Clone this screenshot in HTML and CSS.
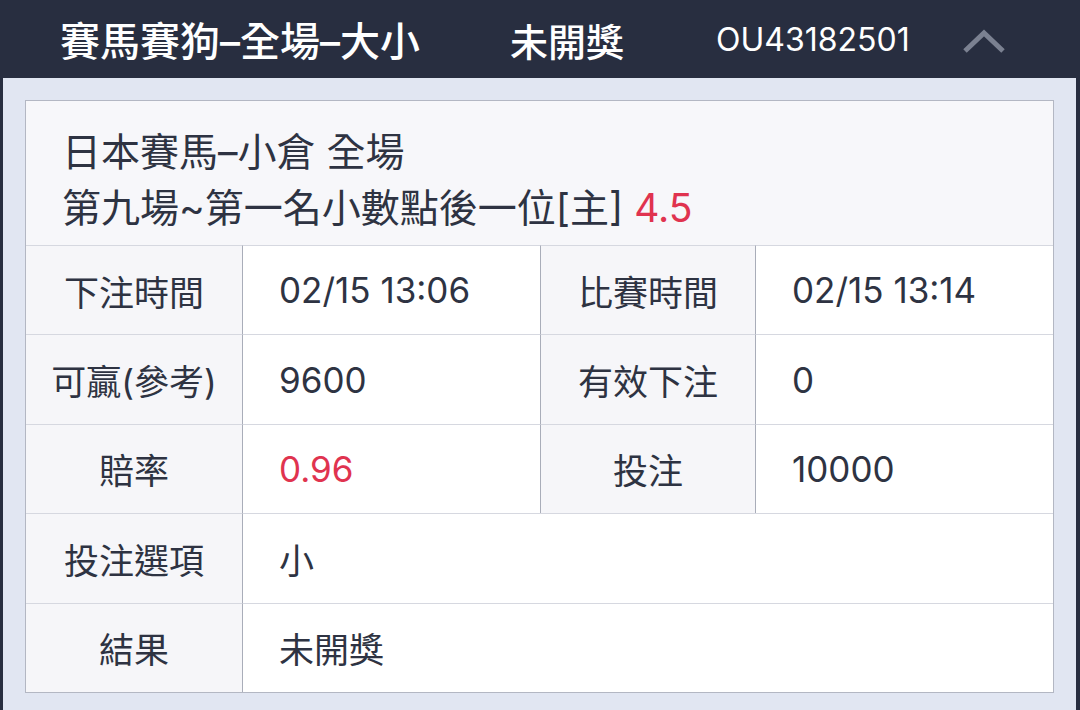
FILE: index.html
```html
<!DOCTYPE html>
<html lang="zh-Hant">
<head>
    <meta charset="UTF-8">
    <meta name="viewport" content="width=device-width, initial-scale=1.0">
    <title>注單詳情</title>
    <link rel="stylesheet" href="styles.css">
</head>
<body>
<header class="bar">
    <div class="bar-title">賽馬賽狗–全場–大小</div>
    <div class="bar-status">未開獎</div>
    <div class="bar-code">OU43182501</div>
    <div class="bar-toggle">
        <svg width="46" height="28" viewBox="0 0 46 28">
            <polyline points="4,24 23,6 42,24" fill="none" stroke="#7b8191" stroke-width="5"/>
        </svg>
    </div>
</header>

<div class="panel">
    <div class="card">
        <div class="card-head">
            <div>日本賽馬–小倉 全場</div>
            <div>第九場~第一名小數點後一位[主] <span class="red">4.5</span></div>
        </div>

        <div class="detail">
            <div class="cell label">下注時間</div>
            <div class="cell value">02/15 13:06</div>
            <div class="cell label mid">比賽時間</div>
            <div class="cell value">02/15 13:14</div>

            <div class="cell label">可贏(參考)</div>
            <div class="cell value">9600</div>
            <div class="cell label mid">有效下注</div>
            <div class="cell value">0</div>

            <div class="cell label">賠率</div>
            <div class="cell value red">0.96</div>
            <div class="cell label mid">投注</div>
            <div class="cell value">10000</div>

            <div class="cell label">投注選項</div>
            <div class="cell value wide">小</div>

            <div class="cell label">結果</div>
            <div class="cell value wide">未開獎</div>
        </div>
    </div>
</div>
</body>
</html>
```

FILE: styles.css
```css
:root {
    --dark: #282e40;
    --panel: #e1e6f2;
    --text: #2e3342;
    --red: #e0334f;
    --line: #d6d8e0;
    --vline: #a9adb9;
}

body {
    margin: 0;
    padding: 0;
    background: var(--dark);
    font-family: Inter, "Noto Sans CJK TC", sans-serif;
    color: var(--text);
    height: 710px;
    overflow: hidden;
}

.bar {
    display: flex;
    align-items: center;
    height: 78px;
    padding-left: 60px;
    color: #fff;
    box-sizing: border-box;
}

.bar-title {
    width: 450px;
    font-size: 40px;
    font-weight: 500;
}

.bar-status {
    width: 206px;
    font-size: 38px;
    font-weight: 500;
}

.bar-code {
    width: 245px;
    font-size: 32px;
}

.bar-toggle {
    display: flex;
    padding-top: 4px;
}

.panel {
    background: var(--panel);
    margin: 0 4px 0 3px;
    padding: 22px 22px 0 22px;
    height: 632px;
    box-sizing: border-box;
}

.card {
    border: 1px solid #b3b7c3;
    background: #f7f7fa;
}

.card-head {
    padding: 23px 36px 9px;
    font-size: 39px;
    line-height: 56px;
}

.red {
    color: var(--red);
}

.detail {
    display: grid;
    grid-template-columns: 216px 298px 215px 1fr;
    grid-auto-rows: 89.4px;
    background: #fff;
}

.cell {
    display: flex;
    align-items: center;
    border-top: 1px solid var(--line);
    font-size: 35px;
    box-sizing: border-box;
}

.label {
    justify-content: center;
    background: #f6f6f9;
}

.value {
    padding-left: 36px;
    background: #fff;
    border-left: 1px solid var(--vline);
}

.label.mid {
    border-left: 1px solid var(--vline);
}

.wide {
    grid-column: span 3;
}
```
